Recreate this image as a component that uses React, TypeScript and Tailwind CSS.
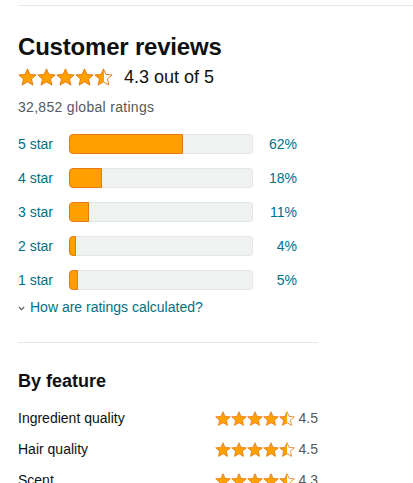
import { useId } from "react";

const ratings = [
  { label: "5 star", pct: 62 },
  { label: "4 star", pct: 18 },
  { label: "3 star", pct: 11 },
  { label: "2 star", pct: 4 },
  { label: "1 star", pct: 5 },
];

const features = [
  { name: "Ingredient quality", value: "4.5" },
  { name: "Hair quality", value: "4.5" },
  { name: "Scent", value: "4.3" },
];

const STAR = "10,0.9 12.6,6.8 19.1,7.3 14.2,11.6 15.7,18 10,14.6 4.3,18 5.8,11.6 0.9,7.3 7.4,6.8";

function Star({ half, size }: { half?: boolean; size: number }) {
  const id = useId();
  return (
    <svg width={size} height={size * 0.95} viewBox="0 0 20 19" className="shrink-0">
      <defs>
        <linearGradient id={id} x1="0" x2="1" y1="0" y2="0">
          <stop offset="0.5" stopColor="#ffa000" />
          <stop offset="0.5" stopColor="#ffffff" />
        </linearGradient>
      </defs>
      <polygon
        points={STAR}
        fill={half ? `url(#${id})` : "#ffa000"}
        stroke="#e47911"
        strokeWidth="1"
        strokeLinejoin="round"
      />
    </svg>
  );
}

function Stars({ size }: { size: number }) {
  return (
    <div className="flex items-center">
      <Star size={size} />
      <Star size={size} />
      <Star size={size} />
      <Star size={size} />
      <Star size={size} half />
    </div>
  );
}

export default function App() {
  return (
    <div className="min-h-[483px] bg-white pl-[18px] pt-[5px] font-['Liberation_Sans',Arial,sans-serif] text-[#0f1111]">
      <div className="h-px bg-[#e7e7e7]" />
      <div className="w-[300px]">
        <h2 className="mt-[25px] text-[24px] font-bold leading-[32px] tracking-[-0.2px]">Customer reviews</h2>

        <div className="flex h-[28px] items-center">
          <Stars size={19} />
          <span className="ml-[11px] text-[18px] leading-[28px]">4.3 out of 5</span>
        </div>

        <p className="mt-[6px] text-[14px] leading-[20px] tracking-[0.3px] text-[#565959]">32,852 global ratings</p>

        <div className="mt-[10px]">
          {ratings.map((r) => (
            <div key={r.label} className="flex h-[34px] items-center text-[14px] text-[#007185]">
              <span className="w-[51px] shrink-0">{r.label}</span>
              <div className="flex h-[20px] w-[184px] overflow-hidden rounded-[4px] bg-[#f0f2f2] shadow-[inset_0_0_0_1px_#e3e6e6]">
                <div
                  className="h-full rounded-l-[4px] border border-[#e47911] bg-[#ffa000]"
                  style={{ width: `${r.pct}%` }}
                />
              </div>
              <span className="w-[44px] text-right">{r.pct}%</span>
            </div>
          ))}
        </div>

        <div className="flex h-[20px] items-center text-[14px] leading-[20px] text-[#007185]">
          <svg width="7" height="5" viewBox="0 0 7 5" className="mr-[5px] mt-[2px]">
            <path d="M0.8 0.8 L3.5 3.6 L6.2 0.8" fill="none" stroke="#565959" strokeWidth="1.2" />
          </svg>
          <span>How are ratings calculated?</span>
        </div>

        <div className="mt-[25px] h-px bg-[#e7e7e7]" />

        <h3 className="mt-[26px] text-[18px] font-bold leading-[24px]">By feature</h3>

        <div className="mt-[10px]">
          {features.map((f) => (
            <div key={f.name} className="flex h-[31px] items-center justify-between text-[14px]">
              <span>{f.name}</span>
              <div className="flex items-center">
                <Stars size={16} />
                <span className="ml-[4px] text-[#565959]">{f.value}</span>
              </div>
            </div>
          ))}
        </div>
      </div>
    </div>
  );
}
